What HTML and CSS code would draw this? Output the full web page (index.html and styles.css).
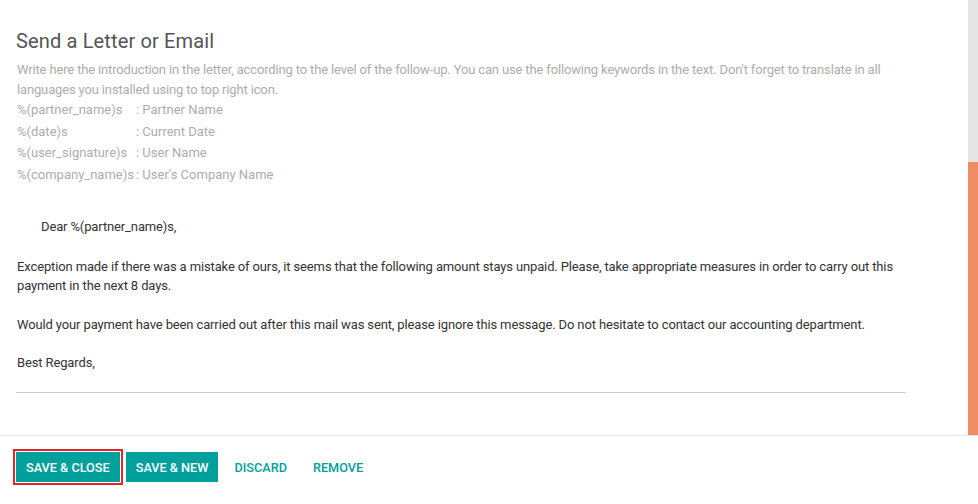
FILE: index.html
```html
<!DOCTYPE html>
<html lang="en">
<head>
  <meta charset="UTF-8">
  <title>Follow-up Level</title>
  <link rel="stylesheet" href="styles.css">
</head>
<body>
  <div id="dialog">
    <div class="scroll-area">
      <div class="content">
        <h2 class="title">Send a Letter or Email</h2>
        <p class="help">Write here the introduction in the letter, according to the level of the follow-up. You can use the following keywords in the text. Don't forget to translate in all languages you installed using to top right icon.</p>
        <table class="keywords">
          <tr><td>%(partner_name)s</td><td>: Partner Name</td></tr>
          <tr><td>%(date)s</td><td>: Current Date</td></tr>
          <tr><td>%(user_signature)s</td><td>: User Name</td></tr>
          <tr><td>%(company_name)s</td><td>: User's Company Name</td></tr>
        </table>

        <div class="letter">
          <p class="greeting">Dear %(partner_name)s,</p>
          <p>Exception made if there was a mistake of ours, it seems that the following amount stays unpaid. Please, take appropriate measures in order to carry out this payment in the next 8 days.</p>
          <p>Would your payment have been carried out after this mail was sent, please ignore this message. Do not hesitate to contact our accounting department.</p>
          <p>Best Regards,</p>
        </div>
        <hr>
      </div>
      <div class="scrollbar">
        <div class="thumb"></div>
      </div>
    </div>

    <div class="footer">
      <button class="btn primary focused">Save &amp; Close</button>
      <button class="btn primary">Save &amp; New</button>
      <button class="btn link">Discard</button>
      <button class="btn link">Remove</button>
    </div>
  </div>
</body>
</html>
```

FILE: styles.css
```css
body {
  margin: 0;
  font-family: Roboto, "Liberation Sans", sans-serif;
  font-size: 13px;
  color: #4c4c4c;
  background: white;
}

#dialog {
  display: flex;
  flex-direction: column;
  height: 504px;
}

.scroll-area {
  display: flex;
  height: 435px;
  overflow: hidden;
}

.content {
  flex: 1;
  padding: 29px 62px 0 16px;
}

.title {
  margin: 0 0 7px 0;
  font-size: 20px;
  font-weight: 400;
  line-height: 24px;
  letter-spacing: 0.15px;
  color: #555;
}

.help {
  margin: 0;
  padding-left: 1px;
  line-height: 19.5px;
  letter-spacing: -0.15px;
  color: #adadad;
}

.keywords {
  border-collapse: collapse;
  color: #adadad;
}

.keywords td {
  padding: 0 2px 0 0;
  height: 21.5px;
  line-height: 21.5px;
  white-space: nowrap;
}

.keywords td:first-child {
  width: 117px;
  padding-left: 1px;
}

.letter {
  margin-top: 32px;
  padding-left: 1px;
  color: #333;
  line-height: 19px;
  letter-spacing: -0.13px;
}

.letter p {
  margin: 0 0 19.5px 0;
}

.letter .greeting {
  padding-left: 24px;
  margin-bottom: 21px;
}

hr {
  margin: 20px 0 0 0;
  border: none;
  border-top: 1px solid #ccc;
}

.scrollbar {
  width: 10px;
  background: #e5e5e5;
  display: flex;
  flex-direction: column;
  justify-content: flex-end;
}

.thumb {
  height: 273px;
  background: #f08c64;
}

.footer {
  border-top: 1px solid #e5e5e5;
  display: flex;
  gap: 6px;
  padding: 16px 16px 0 16px;
  align-items: flex-start;
}

.btn {
  font-family: Roboto, "Liberation Sans", sans-serif;
  font-size: 12.7px;
  font-weight: 500;
  text-transform: uppercase;
  height: 30px;
  padding: 0 10px;
  border: none;
  cursor: pointer;
}

.primary {
  background: #00a09d;
  color: white;
}

.link {
  background: none;
  color: #00a09d;
}

.focused {
  box-shadow: 0 0 0 1px #fff, 0 0 0 3px #e4262c;
}
```
